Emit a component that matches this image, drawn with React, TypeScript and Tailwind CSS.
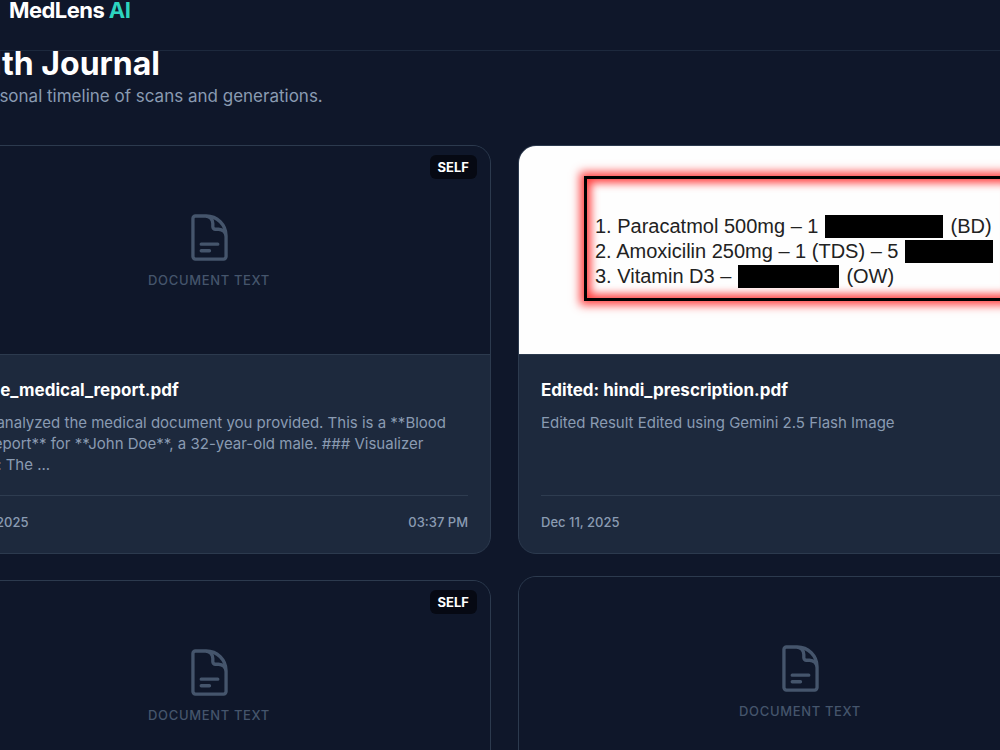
import type { ReactNode } from 'react';

type Entry = {
  title: string;
  summary: string;
  date: string;
  time: string;
  badge?: string;
  preview?: ReactNode;
};

function DocumentPlaceholder() {
  return (
    <div className="flex h-full flex-col items-center justify-center gap-[7px] text-slate-600">
      <svg
        className="size-[53px]"
        viewBox="0 0 24 24"
        fill="none"
        stroke="currentColor"
        strokeWidth="1.5"
        strokeLinecap="round"
        strokeLinejoin="round"
        aria-hidden="true"
      >
        <path d="M19.5 14.25v-2.625a3.375 3.375 0 0 0-3.375-3.375h-1.5A1.125 1.125 0 0 1 13.5 7.125v-1.5a3.375 3.375 0 0 0-3.375-3.375H8.25m0 12.75h7.5m-7.5 3H12M10.5 2.25H5.625c-.621 0-1.125.504-1.125 1.125v17.25c0 .621.504 1.125 1.125 1.125h12.75c.621 0 1.125-.504 1.125-1.125V11.25a9 9 0 0 0-9-9Z" />
      </svg>
      <span className="text-[13px] leading-[18px] font-medium tracking-wider uppercase">Document Text</span>
    </div>
  );
}

function PrescriptionPreview() {
  return (
    <div className="h-full bg-[#fefefe] px-[65px] pt-[30px]">
      <div className="flex h-[125px] flex-col justify-end border-3 border-black pb-[9px] pl-[8px] font-['Liberation_Sans',sans-serif] text-[20px] leading-[25px] whitespace-nowrap text-[#222] shadow-[0_0_9px_4px_#ff4242,inset_0_0_9px_4px_#ff4242]">
        <p className="flex items-center gap-[7px]">
          1. Paracatmol 500mg – 1 <span className="h-[23px] w-[118px] bg-black" /> (BD)
        </p>
        <p className="flex items-center gap-[7px]">
          2. Amoxicilin 250mg – 1 (TDS) – 5 <span className="h-[23px] w-[88px] bg-black" />
        </p>
        <p className="flex items-center gap-[7px]">
          3. Vitamin D3 – <span className="h-[23px] w-[101px] bg-black" /> (OW)
        </p>
      </div>
    </div>
  );
}

const leftEntries: Entry[] = [
  {
    title: 'sample_medical_report.pdf',
    summary:
      'I have analyzed the medical document you provided. This is a **Blood Test Report** for **John Doe**, a 32-year-old male. ### Visualizer Report: The ...',
    date: 'Dec 11, 2025',
    time: '03:37 PM',
    badge: 'SELF',
  },
  {
    title: 'sample_medical_report.pdf',
    summary: 'I have analyzed the medical document you provided.',
    date: 'Dec 11, 2025',
    time: '03:30 PM',
    badge: 'SELF',
  },
];

const rightEntries: Entry[] = [
  {
    title: 'Edited: hindi_prescription.pdf',
    summary: 'Edited Result Edited using Gemini 2.5 Flash Image',
    date: 'Dec 11, 2025',
    time: '3:35 PM',
    preview: <PrescriptionPreview />,
  },
  {
    title: 'hindi_prescription.pdf',
    summary: 'I have analyzed the medical document you provided.',
    date: 'Dec 11, 2025',
    time: '3:28 PM',
  },
];

function EntryCard({ entry }: { entry: Entry }) {
  return (
    <article className="relative overflow-hidden rounded-[18px] border border-[#2c3a4e] bg-slate-800">
      <div className="h-[209px] border-b border-[#2c3a4e] bg-[#0f172a]">
        {entry.preview ?? <DocumentPlaceholder />}
      </div>
      {entry.badge && (
        <span className="absolute top-[9px] right-[13px] rounded-[6px] bg-[#060913] px-2 text-[13px] leading-[24px] font-bold text-white">
          {entry.badge}
        </span>
      )}
      <div className="p-[22px]">
        <h2 className="truncate text-[17px] leading-[27px] font-bold text-white">{entry.title}</h2>
        <p className="mt-[8px] h-[65px] text-[15px] leading-[21px] text-[#8a9bb2]">{entry.summary}</p>
        <footer className="mt-[18px] flex justify-between border-t border-[#2e3c50] pt-[17px] text-[13px] leading-[18px] font-medium text-[#8a9bb2]">
          <time>{entry.date}</time>
          <span>{entry.time}</span>
        </footer>
      </div>
    </article>
  );
}

export default function App() {
  return (
    <div className="h-screen overflow-hidden bg-[#0f172a] font-[Inter,sans-serif] text-white">
      <header className="relative flex h-[51px] items-start border-b border-slate-800 bg-[#0f172a] px-[9px]">
        <a href="#" className="-mt-[5px] text-[22px] leading-[31px] font-bold tracking-tight">
          MedLens <span className="text-[#2dd4bf]">AI</span>
        </a>
      </header>
      <main className="-mr-[82px] -ml-[73px]">
        <div className="-mt-2 px-1">
          <h1 className="text-[32px] leading-[41px] font-bold">Health Journal</h1>
          <p className="text-[17px] leading-[24px] text-[#8a9bb2]">
            Your personal timeline of scans and generations.
          </p>
        </div>
        <div className="mt-[37px] grid grid-cols-2 gap-[27px]">
          <section className="flex flex-col gap-[26px]">
            {leftEntries.map((entry, i) => (
              <EntryCard key={i} entry={entry} />
            ))}
          </section>
          <section className="flex flex-col gap-[22px]">
            {rightEntries.map((entry, i) => (
              <EntryCard key={i} entry={entry} />
            ))}
          </section>
        </div>
      </main>
    </div>
  );
}
